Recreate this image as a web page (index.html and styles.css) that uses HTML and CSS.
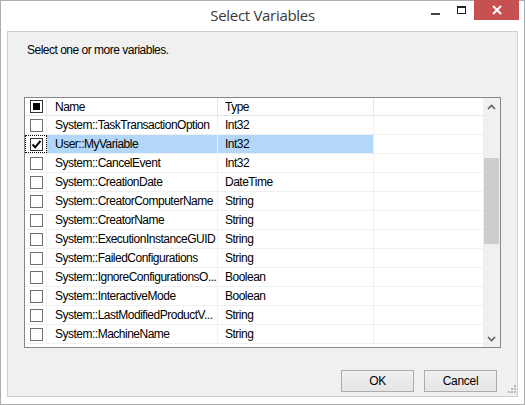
FILE: index.html
```html
<!DOCTYPE html>
<html>
<head>
<meta charset="utf-8">
<link rel="stylesheet" href="styles.css">
</head>
<body>
<div class="window">
  <div class="titlebar">
    <div class="title">Select Variables</div>
    <div class="controls">
      <div class="ctl min"><span class="min-bar"></span></div>
      <div class="ctl max"><span class="max-box"></span></div>
      <div class="ctl close">
        <svg width="10" height="10" viewBox="0 0 10 10"><path d="M1 1 L9 9 M9 1 L1 9" stroke="#fff" stroke-width="2"/></svg>
      </div>
    </div>
  </div>
  <div class="client">
    <div class="prompt">Select one or more variables.</div>
    <div class="list">
      <div class="list-body">
        <div class="row head">
          <div class="c-chk"><span class="box indet"><span></span></span></div>
          <div class="c-name">Name</div>
          <div class="c-type">Type</div>
        </div>
        <div class="row"><div class="c-chk"><span class="box"></span></div><div class="c-name">System::TaskTransactionOption</div><div class="c-type">Int32</div></div>
        <div class="row sel"><div class="c-chk focus"><span class="box checked"><svg width="11" height="11" viewBox="0 0 11 11"><path d="M1.5 5.5 L4.2 8.3 L9.5 1.8" fill="none" stroke="#000" stroke-width="2"/></svg></span></div><div class="c-name">User::MyVariable</div><div class="c-type">Int32</div></div>
        <div class="row"><div class="c-chk"><span class="box"></span></div><div class="c-name">System::CancelEvent</div><div class="c-type">Int32</div></div>
        <div class="row"><div class="c-chk"><span class="box"></span></div><div class="c-name">System::CreationDate</div><div class="c-type">DateTime</div></div>
        <div class="row"><div class="c-chk"><span class="box"></span></div><div class="c-name">System::CreatorComputerName</div><div class="c-type">String</div></div>
        <div class="row"><div class="c-chk"><span class="box"></span></div><div class="c-name">System::CreatorName</div><div class="c-type">String</div></div>
        <div class="row"><div class="c-chk"><span class="box"></span></div><div class="c-name">System::ExecutionInstanceGUID</div><div class="c-type">String</div></div>
        <div class="row"><div class="c-chk"><span class="box"></span></div><div class="c-name">System::FailedConfigurations</div><div class="c-type">String</div></div>
        <div class="row"><div class="c-chk"><span class="box"></span></div><div class="c-name">System::IgnoreConfigurationsO...</div><div class="c-type">Boolean</div></div>
        <div class="row"><div class="c-chk"><span class="box"></span></div><div class="c-name">System::InteractiveMode</div><div class="c-type">Boolean</div></div>
        <div class="row"><div class="c-chk"><span class="box"></span></div><div class="c-name">System::LastModifiedProductV...</div><div class="c-type">String</div></div>
        <div class="row"><div class="c-chk"><span class="box"></span></div><div class="c-name">System::MachineName</div><div class="c-type">String</div></div>
      </div>
      <div class="vscroll">
        <div class="arrow"><svg width="9" height="6" viewBox="0 0 9 6"><path d="M1 5 L4.5 1.5 L8 5" fill="none" stroke="#606060" stroke-width="1.6"/></svg></div>
        <div class="track"><div class="thumb"></div></div>
        <div class="arrow"><svg width="9" height="6" viewBox="0 0 9 6"><path d="M1 1 L4.5 4.5 L8 1" fill="none" stroke="#606060" stroke-width="1.6"/></svg></div>
      </div>
    </div>
    <div class="buttons">
      <button class="btn">OK</button>
      <button class="btn">Cancel</button>
    </div>
    <div class="grip">
      <svg width="8" height="8" viewBox="0 0 8 8" fill="#b8b8b8">
        <rect x="6" y="0" width="2" height="2"/><rect x="3" y="3" width="2" height="2"/><rect x="6" y="3" width="2" height="2"/>
        <rect x="0" y="6" width="2" height="2"/><rect x="3" y="6" width="2" height="2"/><rect x="6" y="6" width="2" height="2"/>
      </svg>
    </div>
  </div>
</div>
</body>
</html>
```

FILE: styles.css
```css
html, body {
  margin: 0;
  padding: 0;
  background: #ffffff;
}
body {
  font-family: "Liberation Sans", Arial, sans-serif;
  font-size: 12px;
  letter-spacing: -0.5px;
  color: #000;
}
.window {
  width: 525px;
  height: 405px;
  box-sizing: border-box;
  border: 1px solid #adadad;
  background: #ffffff;
  display: flex;
  flex-direction: column;
  padding: 0 6px 7px 6px;
}
.titlebar {
  height: 30px;
  flex: none;
  position: relative;
  display: flex;
  align-items: center;
  justify-content: center;
}
.title {
  font-family: "Open Sans", "Liberation Sans", sans-serif;
  font-size: 15px;
  color: #3a3a3a;
  margin-top: -2px;
  letter-spacing: -0.3px;
}
.controls {
  position: absolute;
  right: -1px;
  top: -1px;
  display: flex;
}
.ctl {
  height: 20px;
  display: flex;
  align-items: center;
  justify-content: center;
}
.ctl.min { width: 25px; }
.ctl.max { width: 26px; }
.ctl.close {
  width: 45px;
  background: #c75050;
}
.min-bar {
  display: block;
  width: 9px;
  height: 2px;
  background: #444;
  margin-top: 8px;
}
.max-box {
  display: block;
  width: 7px;
  height: 5px;
  border: 1px solid #222;
  border-top-width: 2px;
}
.client {
  flex: 1;
  background: #f0f0f0;
  border: 1px solid #cfcfcf;
  display: flex;
  flex-direction: column;
  position: relative;
}
.prompt {
  padding: 11px 0 0 19px;
  height: 24px;
  line-height: 15px;
}
.list {
  margin: 30px 0 0 16px;
  width: 477px;
  height: 251px;
  box-sizing: border-box;
  border: 1px solid #828790;
  background: #fff;
  display: flex;
  overflow: hidden;
}
.list-body {
  flex: 1;
  overflow: hidden;
}
.row {
  display: flex;
  height: 19px;
  box-sizing: border-box;
  border-bottom: 1px solid #f0f0f0;
  align-items: stretch;
}
.row.head {
  height: 18px;
  border-bottom: 1px solid #e5e5e5;
}
.row > div {
  box-sizing: border-box;
  display: flex;
  align-items: center;
  white-space: nowrap;
  overflow: hidden;
}
.c-chk {
  width: 22px;
  justify-content: center;
  border-right: 1px solid #f0f0f0;
}
.c-name {
  width: 171px;
  padding-left: 8px;
  border-right: 1px solid #f0f0f0;
}
.c-type {
  width: 156px;
  padding-left: 7px;
  border-right: 1px solid #f0f0f0;
}
.row.head > div { border-right-color: #e5e5e5; }
.row.sel .c-name, .row.sel .c-type { background: #b3d7f9; }
.c-chk.focus {
  outline: 1px dotted #000;
  outline-offset: -1px;
}
.box {
  width: 13px;
  height: 13px;
  box-sizing: border-box;
  border: 1px solid #707070;
  background: #fff;
  display: flex;
  align-items: center;
  justify-content: center;
  margin-left: 1px;
}
.box.indet { border-color: #333; }
.box.indet span {
  display: block;
  width: 7px;
  height: 7px;
  background: #000;
}
.box.checked { border-color: #333; }
.vscroll {
  width: 17px;
  flex: none;
  background: #f0f0f0;
  display: flex;
  flex-direction: column;
}
.arrow {
  height: 17px;
  display: flex;
  align-items: center;
  justify-content: center;
}
.track {
  flex: 1;
  position: relative;
}
.thumb {
  margin: 43px 1px 0 1px;
  height: 86px;
  background: #cdcdcd;
}
.buttons {
  margin-top: 22px;
  display: flex;
  justify-content: flex-end;
  gap: 10px;
  padding-right: 20px;
}
.btn {
  width: 73px;
  height: 22px;
  box-sizing: border-box;
  border: 1px solid #acacac;
  background: linear-gradient(#f0f0f0, #e5e5e5);
  font-family: "Liberation Sans", Arial, sans-serif;
  font-size: 12px;
  letter-spacing: -0.3px;
  color: #000;
  padding: 0;
}
.grip {
  position: absolute;
  right: 1px;
  bottom: 3px;
  line-height: 0;
}
```
